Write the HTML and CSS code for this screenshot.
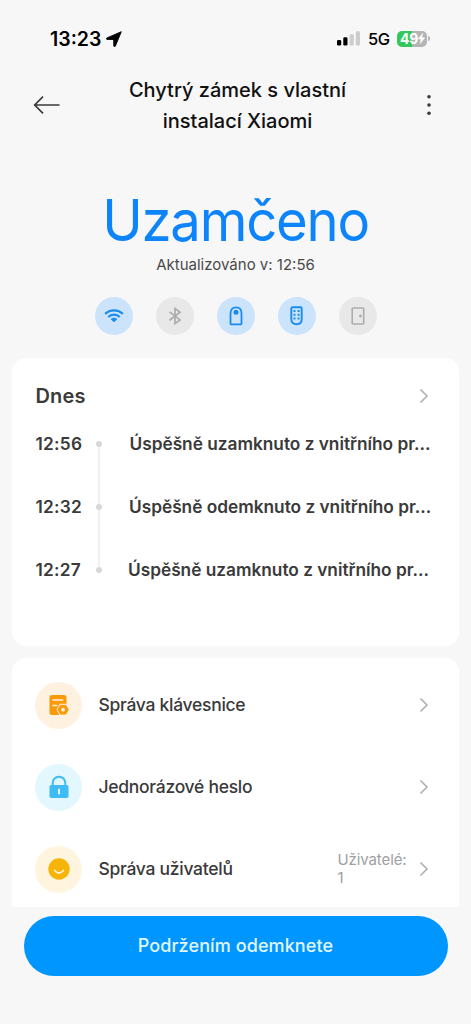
FILE: index.html
```
<!DOCTYPE html>
<html lang="cs">
<head>
<meta charset="utf-8">
<title>Chytrý zámek</title>
<link rel="stylesheet" href="styles.css">
</head>
<body>
<div class="screen">
  <div class="status">
    <span class="clock">13:23</span>
    <svg class="locate" width="17" height="16" viewBox="0 0 17 16"><path d="M15.300.7 1 6.900c-.9.4-.7 1.500.2 1.500l6.500.1.1 6.400c0 .9 1.100 1.100 1.500.3z" fill="#000" stroke="#000" stroke-width=".9" stroke-linejoin="round"/></svg>
    <svg class="signal" width="24" height="15" viewBox="0 0 24 15"><rect x="0" y="9" width="4.200" height="5.500" rx="1.300"/><rect x="6.300" y="6.300" width="4.200" height="8.200" rx="1.300"/><rect x="12.600" y="3.300" width="4.200" height="11.200" rx="1.300" fill="#cdcdcd"/><rect x="18.800" y=".3" width="4.200" height="14.200" rx="1.300" fill="#cdcdcd"/></svg>
    <span class="network">5G</span>
    <div class="battery"><span class="level">49</span><svg width="7" height="11" viewBox="0 0 7 11"><path d="M4.600.3.300 6h2.700l-.8 4.700L6.700 4.700H3.900z" fill="#fff" stroke="#fff" stroke-width=".5"/></svg></div><i class="cap"></i>
  </div>

  <header class="header">
    <svg class="back" width="28" height="20" viewBox="0 0 28 20"><path d="M26.500 10H2M10 1.700 1.700 10l8.300 8.300" fill="none" stroke="#3a3a3a" stroke-width="1.700"/></svg>
    <h1 class="title">Chytrý zámek s vlastní<br>instalací Xiaomi</h1>
    <svg class="more" width="6" height="22" viewBox="0 0 6 22"><circle cx="3" cy="2.800" r="1.800"/><circle cx="3" cy="11" r="1.800"/><circle cx="3" cy="19.200" r="1.800"/></svg>
  </header>

  <section class="hero">
    <div class="state">Uzamčeno</div>
    <div class="updated">Aktualizováno v: 12:56</div>
    <div class="badges">
      <span class="badge on"><svg width="20" height="16" viewBox="0 0 20 16" fill="none" stroke="#1a8cf0" stroke-width="2.300"><path d="M1.200 5.900a12.500 12.500 0 0 1 17.600 0M4.200 9a8.300 8.300 0 0 1 11.600 0"/><path d="M10 13.800l-3-2.600a4.600 4.600 0 0 1 6 0z" fill="#1a8cf0" stroke-width=".8" stroke-linejoin="round"/></svg></span>
      <span class="badge"><svg width="14" height="18" viewBox="0 0 14 18" fill="none" stroke="#acacac" stroke-width="1.700"><path d="M1.500 4.800 12 12.900 7 16.600V1.400l5 3.800L1.500 13.200"/></svg></span>
      <span class="badge on"><svg width="14" height="20" viewBox="0 0 14 20" fill="none" stroke="#1a8cf0" stroke-width="1.800"><path d="M1.500 7.200C1.500 3.500 3.800 1.300 7 1.300s5.500 2.200 5.500 5.900v10.300a.8.8 0 0 1-.8.8H2.300a.8.8 0 0 1-.8-.8z"/><circle cx="7" cy="6.300" r="2.500" fill="#1a8cf0" stroke="none"/></svg></span>
      <span class="badge on"><svg width="13" height="20" viewBox="0 0 13 20"><path d="M1.300 2.300a1 1 0 0 1 1-1h8.400a1 1 0 0 1 1 1v11c0 3-2.100 5-5.200 5s-5.200-2-5.200-5z" fill="none" stroke="#1a8cf0" stroke-width="1.900"/><path d="M4.500 4v10M8.600 4v10" stroke="#1a8cf0" stroke-width="2" stroke-dasharray="2 1.700" fill="none"/></svg></span>
      <span class="badge"><svg width="14" height="18" viewBox="0 0 14 18"><rect x="1.200" y="1" width="11.500" height="16" rx="1" fill="none" stroke="#acacac" stroke-width="1.600"/><circle cx="9.500" cy="9" r="1.400" fill="#acacac"/></svg></span>
    </div>
  </section>

  <section class="card log">
    <div class="log-head"><h2>Dnes</h2><svg class="chev" width="10" height="16" viewBox="0 0 10 16"><path d="M1.500 1.500 8 8l-6.500 6.500"/></svg></div>
    <ul class="events">
      <li><time>12:56</time><i class="dot"></i><span class="event">Úspěšně uzamknuto z vnitřního pr...</span></li>
      <li><time>12:32</time><i class="dot"></i><span class="event e2">Úspěšně odemknuto z vnitřního pr...</span></li>
      <li><time>12:27</time><i class="dot"></i><span class="event e3">Úspěšně uzamknuto z vnitřního pr...</span></li>
    </ul>
  </section>

  <nav class="card menu">
    <a class="item">
      <span class="disc orange"><svg width="22" height="24" viewBox="0 0 22 24"><rect x="1.500" y="2" width="17" height="20" rx="2.500" fill="#fb9a09"/><path d="M5 7h9.500M5 12.500h3.500" stroke="#fff3df" stroke-width="1.700" stroke-linecap="round"/><path d="M11.800 10.800h6.700l3.500 5.900-3.500 5.900h-6.700l-3.400-5.900z" fill="#fff3df"/><path d="M12.500 12.300h5.200l2.600 4.400-2.600 4.400h-5.200l-2.600-4.400z" fill="#fb9a09" stroke="#fb9a09" stroke-linejoin="round"/><circle cx="15.100" cy="16.700" r="1.900" fill="#fff3df"/></svg></span>
      <span class="label">Správa klávesnice</span>
      <svg class="chev" width="10" height="16" viewBox="0 0 10 16"><path d="M1.500 1.500 8 8l-6.500 6.500"/></svg>
    </a>
    <a class="item">
      <span class="disc cyan"><svg width="22" height="24" viewBox="0 0 22 24"><path d="M4.700 11V8a6.300 6.300 0 0 1 12.600 0v3" fill="none" stroke="#3fbcf4" stroke-width="2"/><rect x="1.500" y="10" width="19" height="13" rx="1.800" fill="#3fbcf4"/><path d="M11 14.500v4" stroke="#e3f7ff" stroke-width="2" stroke-linecap="round"/></svg></span>
      <span class="label">Jednorázové heslo</span>
      <svg class="chev" width="10" height="16" viewBox="0 0 10 16"><path d="M1.500 1.500 8 8l-6.500 6.500"/></svg>
    </a>
    <a class="item">
      <span class="disc yellow"><svg width="22" height="22" viewBox="0 0 22 22"><circle cx="11" cy="11" r="10.700" fill="#f7b408"/><path d="M6.700 12.500q4.300 5 8.600 0" fill="none" stroke="#fff3dc" stroke-width="1.800" stroke-linecap="round"/></svg></span>
      <span class="label">Správa uživatelů</span>
      <span class="count">Uživatelé: 1</span>
      <svg class="chev" width="10" height="16" viewBox="0 0 10 16"><path d="M1.500 1.500 8 8l-6.500 6.500"/></svg>
    </a>
  </nav>

  <footer class="footer"><button class="unlock">Podržením odemknete</button></footer>
</div>
</body>
</html>
```
FILE: styles.css
```
* { box-sizing: border-box; }
body { margin: 0; background: #f7f7f7; font-family: Inter, "Liberation Sans", sans-serif; color: #3a3a3a; }
h1, h2, ul { margin: 0; padding: 0; font-weight: inherit; }
svg { display: block; flex: none; }
.screen { width: 471px; height: 1024px; overflow: hidden; display: flex; flex-direction: column; white-space: nowrap; }

.status { display: flex; align-items: center; height: 75px; padding: 2px 41px 0 50px; color: #000; }
.clock { font-size: 19.500px; font-weight: 600; width: 56px; }
.signal { margin-left: auto; }
.network { font-size: 16.500px; font-weight: 500; width: 22px; margin: 0 7px 0 7px; letter-spacing: -.4px; }
.battery { display: flex; align-items: center; width: 30px; height: 16px; padding-left: 3px; border-radius: 5px; color: #fff; background: linear-gradient(90deg, #34c759 50%, #b4b4b4 50%); }
.level { font-size: 14px; font-weight: 700; letter-spacing: -.2px; }
.cap { width: 2px; height: 5px; margin-left: 1px; border-radius: 0 2px 2px 0; background: #b4b4b4; }

.header { display: flex; align-items: center; height: 61px; padding: 0 39px 0 33px; }
.back, .more { margin-bottom: 1px; }
.title { flex: 1; text-align: center; font-size: 20px; line-height: 31px; font-weight: 500; color: #111; padding: 1px 12px 0 0; }
.more { fill: #3a3a3a; }

.hero { display: flex; flex-direction: column; align-items: center; height: 222px; padding-top: 50px; }
.state { font-size: 57px; line-height: 70px; letter-spacing: -1.300px; color: #0d84fa; transform: scaleX(.955); }
.updated { margin-top: -1px; font-size: 15px; line-height: 20px; color: #4a4a4a; }
.badges { display: flex; gap: 23px; margin-top: 22px; }
.badge { display: grid; place-items: center; width: 38px; height: 38px; border-radius: 50%; background: #e8e8e8; }
.badge.on { background: #cbe3fb; }

.card { margin: 0 12px; background: #fff; border-radius: 14px; }
.chev { fill: none; stroke: #b0b0b0; stroke-width: 1.600; }
.log { height: 288px; padding: 22px 30px 0 23.500px; }
.log-head { display: flex; align-items: center; justify-content: space-between; height: 32px; }
.log-head h2 { font-size: 20px; font-weight: 600; letter-spacing: .15px; }
.events { list-style: none; }
.events li { display: flex; align-items: center; height: 63.200px; font-size: 17.300px; font-weight: 600; letter-spacing: -.02px; }
.events time { flex: none; width: 60px; letter-spacing: .25px; }
.dot { flex: none; position: relative; width: 6px; height: 6px; border-radius: 50%; background: #d8d8d8; }
.events li:not(:last-child) .dot::after { content: ""; position: absolute; left: 2px; top: 6px; width: 2px; height: 57px; background: #f0f0f0; }
.event { margin-left: 28px; }
.e2 { margin-left: 27.500px; }
.e3 { margin-left: 26.500px; }

.menu { height: 249px; margin-top: 12px; padding: 6px 30px 0 23px; border-radius: 14px 14px 0 0; }
.item { display: flex; align-items: center; height: 82px; }
.disc { display: grid; place-items: center; width: 47px; height: 47px; margin-right: 16.500px; border-radius: 50%; }
.orange { background: #fff1df; }
.cyan { background: #e3f7ff; }
.yellow { background: #fff4de; }
.label { margin-right: auto; padding-bottom: 2px; font-size: 17.500px; font-weight: 500; letter-spacing: -.28px; }
.count { width: 70px; margin-right: 11.500px; font-size: 15px; line-height: 18px; letter-spacing: -.1px; color: #a0a0a0; white-space: normal; }

.footer { padding: 8.500px 23.500px 0; }
.unlock { display: block; width: 100%; height: 60.500px; border: 0; border-radius: 31px; background: #0096ff; color: #e2f6ff; font: 500 18px Inter, sans-serif; letter-spacing: .1px; }
```
